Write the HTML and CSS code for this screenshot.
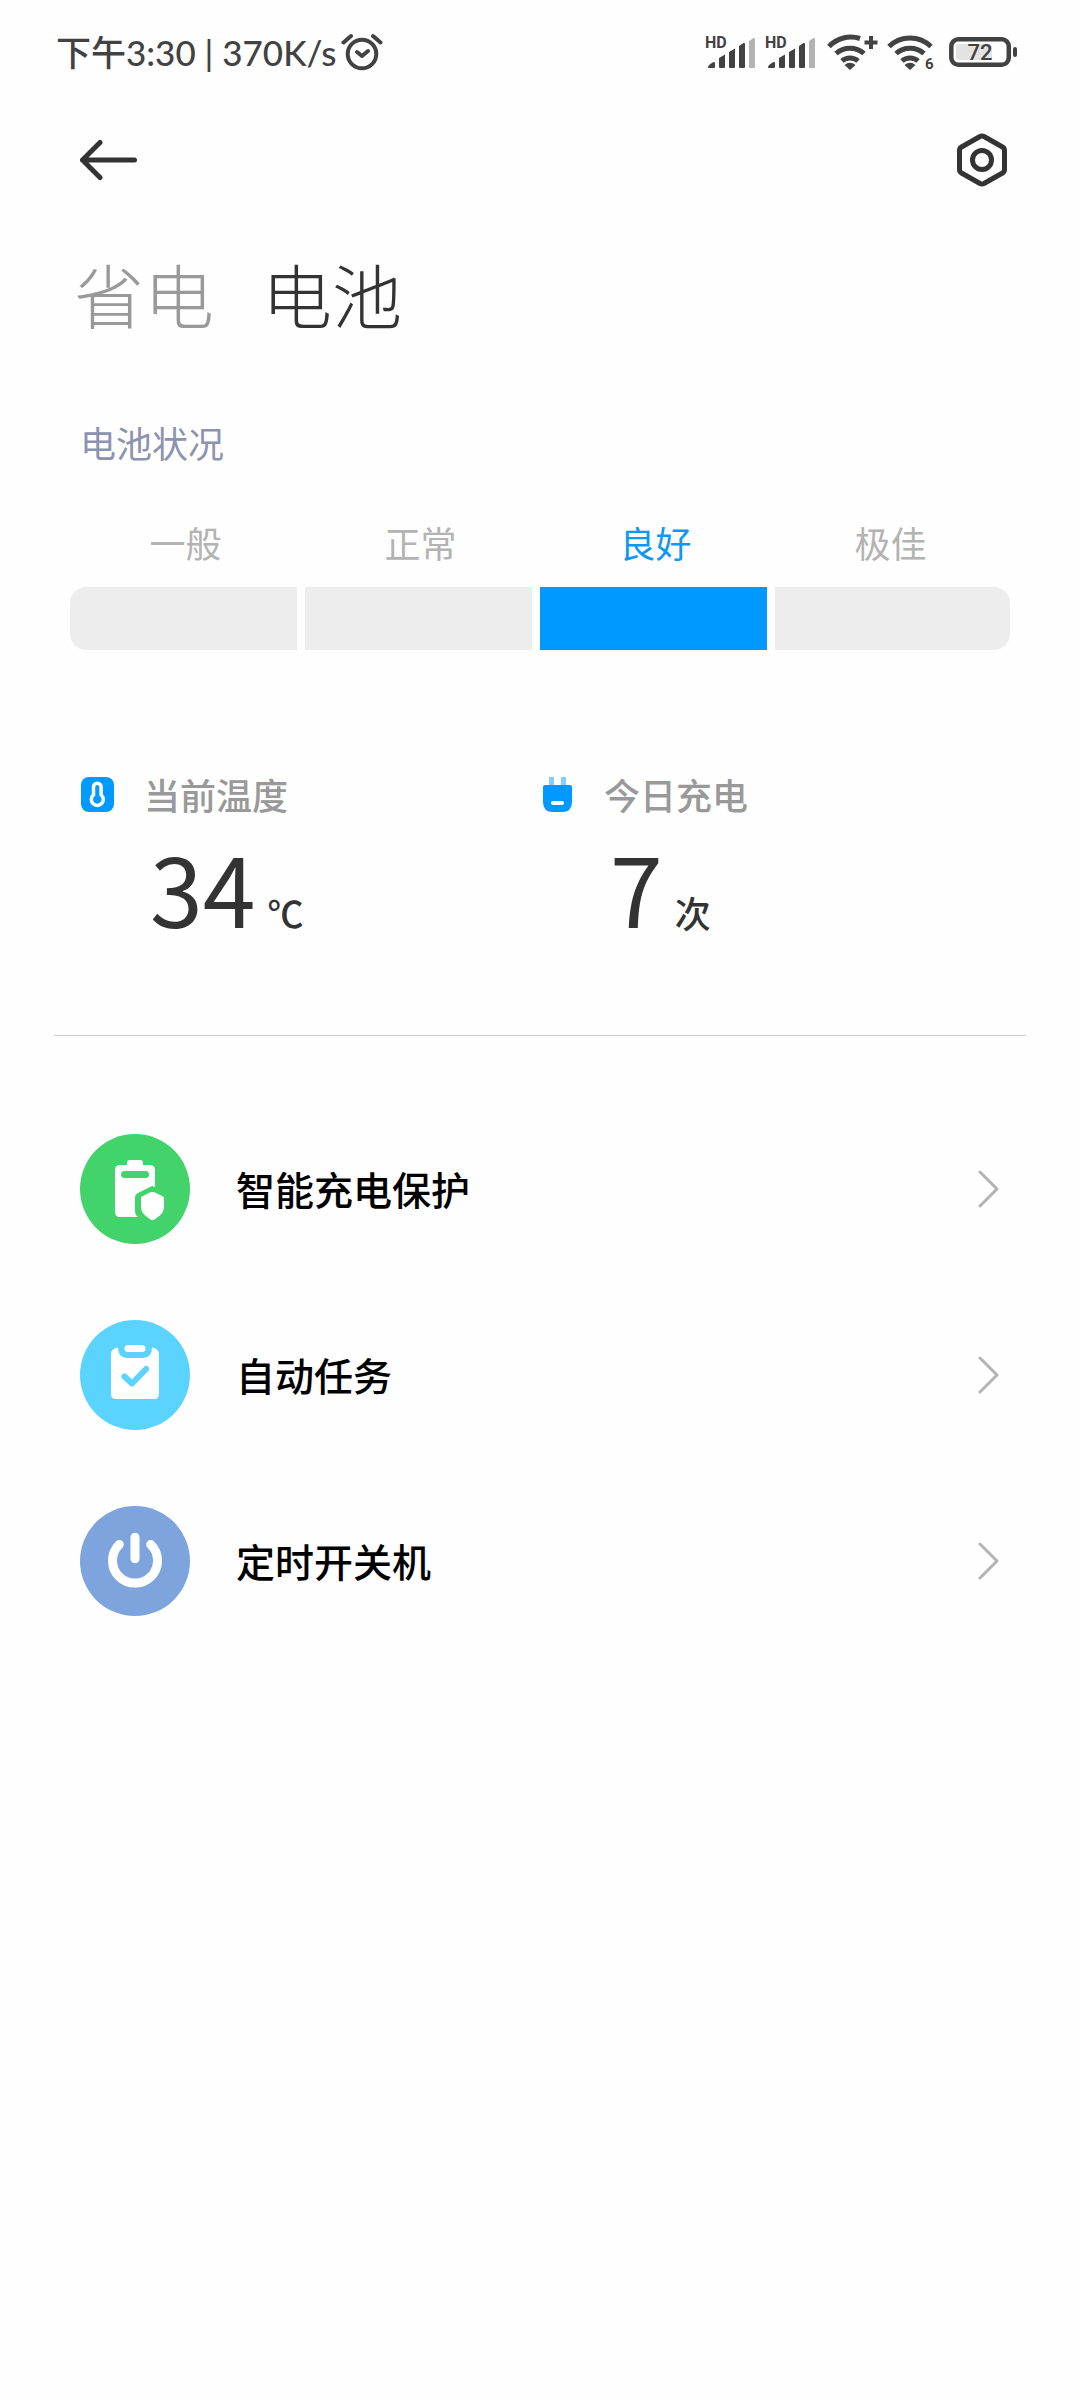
FILE: index.html
```html
<!DOCTYPE html>
<html lang="zh-CN">
<head>
  <meta charset="UTF-8" />
  <meta name="viewport" content="width=device-width, initial-scale=1.0"/>
  <title>电池</title>
  <link rel="stylesheet" href="styles.css">
</head>
<body>
  <div class="status-bar">
    <div class="status-left">
      <span>下午3:30 | 370K/s</span>
      <svg width="42" height="40" viewBox="0 0 42 40" fill="none" stroke="#424242" stroke-width="4" stroke-linecap="round" stroke-linejoin="round">
        <circle cx="21" cy="22" r="14.3"/>
        <path d="M2.500 10.500 10 4M39.500 10.500 32 4M16 20l5 4 6-5"/>
      </svg>
    </div>
    <div class="status-right">
      <svg width="52" height="40" viewBox="0 0 52 40" fill="#424242">
        <text class="hd" x="0" y="16">HD</text>
        <path d="M3 35.500q0-2 2-3.200l3-2q2-1 2 1v3.700q0 1-1 1H4q-1 0-1-.5z"/>
        <path d="M14 26l6-3.500V35q0 1-1 1h-4q-1 0-1-1zM24 20l6-3.500V35q0 1-1 1h-4q-1 0-1-1zM34 14l4.500-3q1.500-.5 1.500 1V35q0 1-1 1h-4q-1 0-1-1z"/>
        <path fill="#b3b3b3" d="M44 9l4.500-3q1.500-.5 1.500 1V35q0 1-1 1h-4q-1 0-1-1z"/>
      </svg>
      <svg width="52" height="40" viewBox="0 0 52 40" fill="#424242">
        <text class="hd" x="0" y="16">HD</text>
        <path d="M3 35.500q0-2 2-3.200l3-2q2-1 2 1v3.700q0 1-1 1H4q-1 0-1-.5z"/>
        <path d="M14 26l6-3.500V35q0 1-1 1h-4q-1 0-1-1zM24 20l6-3.500V35q0 1-1 1h-4q-1 0-1-1zM34 14l4.500-3q1.500-.5 1.500 1V35q0 1-1 1h-4q-1 0-1-1z"/>
        <path fill="#b3b3b3" d="M44 9l4.500-3q1.500-.5 1.500 1V35q0 1-1 1h-4q-1 0-1-1z"/>
      </svg>
      <svg class="wifi" width="52" height="40" viewBox="0 0 52 40" fill="none" stroke="#424242" stroke-width="5">
        <path d="M2 14.500A30 30 0 0 1 33 6.500M9 21.500A21 21 0 0 1 37 21.500M15 29A12 12 0 0 1 31 29"/>
        <path d="M44 4v13M37.500 10.500h13" stroke-width="4"/>
        <path d="M17.500 33q5.500-4.500 11 0l-5.500 5z" fill="#424242" stroke="none"/>
      </svg>
      <svg width="52" height="40" viewBox="0 0 52 40" fill="none" stroke="#424242" stroke-width="5">
        <path d="M2 14.500A30 30 0 0 1 44 14.500M9 21.500A21 21 0 0 1 37 21.500M15 29A12 12 0 0 1 31 29"/>
        <path d="M17.500 33q5.500-4.500 11 0l-5.500 5z" fill="#424242" stroke="none"/>
        <text class="wifi-gen" x="38" y="37">6</text>
      </svg>
      <svg class="battery" width="68" height="32" viewBox="0 0 68 32">
        <rect x="2.300" y="3.300" width="57.500" height="25.500" rx="7" fill="none" stroke="#424242" stroke-width="4.500"/>
        <rect x="7" y="8" width="36" height="16" rx="3" fill="#e3e3e3"/>
        <rect x="64" y="11" width="4" height="10" rx="2" fill="#424242"/>
        <text class="level" x="31" y="24">72</text>
      </svg>
    </div>
  </div>

  <header>
    <button type="button" class="icon-btn" aria-label="返回">
      <svg width="58" height="54" viewBox="0 0 58 54" fill="none" stroke="#333" stroke-width="5" stroke-linecap="round" stroke-linejoin="round">
        <path d="M54.500 27H2.500M20 9.500 2.500 27 20 44.500"/>
      </svg>
    </button>
    <button type="button" class="icon-btn" aria-label="设置">
      <svg width="50" height="54" viewBox="0 0 50 54" fill="none" stroke="#333" stroke-width="5" stroke-linejoin="round">
        <path d="M23 3.500q2-1 4 0l18.500 10.500q2 1.200 2 3.500v19q0 2.300-2 3.500L27 50.500q-2 1-4 0L4.500 40q-2-1.200-2-3.500v-19q0-2.300 2-3.500z"/>
        <circle cx="25" cy="27" r="9.500"/>
      </svg>
    </button>
  </header>

  <nav class="tabs">
    <a href="#saver">省电</a>
    <a href="#battery" class="active">电池</a>
  </nav>

  <main>
    <h2>电池状况</h2>
    <ul class="health">
      <li><span>一般</span><div class="bar"></div></li>
      <li><span>正常</span><div class="bar"></div></li>
      <li class="current"><span>良好</span><div class="bar"></div></li>
      <li><span>极佳</span><div class="bar"></div></li>
    </ul>

    <section class="stats">
      <div class="stat">
        <svg width="34" height="36" viewBox="0 0 34 36">
          <rect x="1" y="1" width="33" height="35" rx="8" fill="#0099ff"/>
          <path d="M13.500 11a3.800 3.800 0 0 1 7.600 0v7.800a6 6 0 1 1-7.600 0z" fill="none" stroke="#fff" stroke-width="3.500"/>
        </svg>
        <h3>当前温度</h3>
        <p><strong>34</strong>℃</p>
      </div>
      <div class="stat">
        <svg width="34" height="36" viewBox="0 0 34 36">
          <path d="M9 1h5v10H9zM21 1h5v10h-5z" fill="#85ccff"/>
          <path d="M5 9h25q2 0 2 2v15q0 10-10 10h-9q-10 0-10-10V11q0-2 2-2z" fill="#0099ff"/>
          <rect x="11" y="25" width="13" height="4" rx="2" fill="#fff"/>
        </svg>
        <h3>今日充电</h3>
        <p><strong>7</strong>次</p>
      </div>
    </section>
  </main>

  <hr>

  <ul class="menu">
    <li>
      <a href="#protect">
        <svg width="110" height="110" viewBox="0 0 110 110">
          <circle cx="55" cy="55" r="55" fill="#42d36b"/>
          <path d="M40 31h7v-2q0-3 3-3h10q3 0 3 3v2h7q5 0 5 5v17l-3-1-14 7q-3 1.500-3 4v14q0 4 3 6H40q-5 0-5-5V36q0-5 5-5z" fill="#fff"/>
          <rect x="41" y="37" width="28" height="7" rx="3.500" fill="#42d36b"/>
          <path d="M70.500 58.300q2-.8 4 0l8 4q1.500.8 1.500 2.500v8q0 5-4.500 9l-5 3.800q-2 1.200-4 0l-5-3.800q-4.500-4-4.500-9v-8q0-1.700 1.500-2.500z" fill="#fff"/>
        </svg>
        <span>智能充电保护</span>
        <svg class="arrow" width="22" height="38" viewBox="0 0 22 38"><path d="M2 2 19 19 2 36"/></svg>
      </a>
    </li>
    <li>
      <a href="#tasks">
        <svg width="110" height="110" viewBox="0 0 110 110">
          <circle cx="55" cy="55" r="55" fill="#5ad3ff"/>
          <path d="M38 27.500q0 10.500 9 10.500h16q9 0 9-10.500 7 1 7 7V74q0 5-5 5H36q-5 0-5-5V34.500q0-6 7-7z" fill="#fff"/>
          <rect x="44.500" y="25" width="21" height="7" rx="3.500" fill="#fff"/>
          <path d="M44.500 56.500 52 63.500 66 49" fill="none" stroke="#5ad3ff" stroke-width="6" stroke-linecap="round" stroke-linejoin="round"/>
        </svg>
        <span>自动任务</span>
        <svg class="arrow" width="22" height="38" viewBox="0 0 22 38"><path d="M2 2 19 19 2 36"/></svg>
      </a>
    </li>
    <li>
      <a href="#schedule">
        <svg width="110" height="110" viewBox="0 0 110 110">
          <circle cx="55" cy="55" r="55" fill="#7ea4de"/>
          <path d="M39.300 38.500a22.500 22.500 0 1 0 31.400 0M55 31.300v21.400" fill="none" stroke="#fff" stroke-width="9" stroke-linecap="round"/>
        </svg>
        <span>定时开关机</span>
        <svg class="arrow" width="22" height="38" viewBox="0 0 22 38"><path d="M2 2 19 19 2 36"/></svg>
      </a>
    </li>
  </ul>
</body>
</html>
```

FILE: styles.css
```css
* {
  box-sizing: border-box;
}
body {
  margin: 0;
  background-color: #fefefe;
  color: #333;
  font-family: "Noto Sans CJK SC", sans-serif;
}
h2, h3, p, ul {
  margin: 0;
  padding: 0;
  font-weight: 400;
}
ul {
  list-style-type: none;
}
svg {
  display: block;
  flex: none;
}
a {
  color: inherit;
  text-decoration: none;
}

.status-bar {
  display: flex;
  justify-content: space-between;
  align-items: center;
  height: 104px;
  padding: 0 63px 0 56px;
}
.status-left {
  display: flex;
  align-items: center;
  gap: 5px;
  color: #424242;
  font-family: Lato, "Noto Sans CJK SC", sans-serif;
  font-size: 35px;
  font-weight: 500;
  line-height: 40px;
}
.status-right {
  display: flex;
  align-items: center;
  gap: 8px;
}
.wifi {
  margin-left: 2px;
}
.battery {
  margin-left: 2px;
}
.hd {
  font: 700 16px Roboto, sans-serif;
}
.wifi-gen {
  font: 700 15px Roboto, sans-serif;
  fill: #424242;
  stroke: none;
}
.level {
  font: 500 22px Roboto, sans-serif;
  fill: #424242;
  text-anchor: middle;
}

header {
  display: flex;
  justify-content: space-between;
  align-items: center;
  height: 112px;
  padding: 0 73px 0 80px;
}
.icon-btn {
  padding: 0;
  border: none;
  background: none;
}

.tabs {
  display: flex;
  gap: 48px;
  padding: 28px 74px 0;
  font-size: 70px;
  font-weight: 300;
  line-height: 100px;
  color: #999;
}
.tabs .active {
  color: #333;
}

h2 {
  padding: 74px 80px 0;
  font-size: 36px;
  line-height: 48px;
  color: #8c93b0;
}

.health {
  display: grid;
  grid-template-columns: repeat(4, 1fr);
  padding: 52px 70px 0;
  font-size: 36px;
  line-height: 48px;
  text-align: center;
  color: #b3b3b3;
}
.health span {
  padding-right: 4px;
}
.health .bar {
  height: 63px;
  margin: 21px 8px 0 0;
  background-color: #ededed;
}
.health li:first-child .bar {
  border-radius: 16px 0 0 16px;
}
.health li:last-child .bar {
  margin-right: 0;
  border-radius: 0 16px 16px 0;
}
.health .current {
  color: #0d97f7;
}
.health .current .bar {
  background-color: #0099ff;
}

.stats {
  display: grid;
  grid-template-columns: 1fr 1fr;
  padding: 120px 80px 0;
}
.stat {
  display: grid;
  grid-template-columns: 34px 1fr;
  column-gap: 30px;
  align-items: center;
}
h3 {
  font-size: 36px;
  font-weight: 500;
  line-height: 48px;
  color: #999;
}
.stat p {
  grid-column: 2;
  display: flex;
  align-items: baseline;
  gap: 12px;
  padding-left: 6px;
  font-size: 36px;
  font-weight: 500;
  line-height: 138px;
}
.stat strong {
  font-size: 95px;
  font-weight: 400;
}

hr {
  margin: 54px 54px 0;
  border: none;
  border-top: 1px solid #ccc;
}

.menu {
  display: flex;
  flex-direction: column;
  gap: 76px;
  padding: 98px 80px;
}
.menu a {
  display: flex;
  align-items: center;
  gap: 46px;
  color: #000;
  font-size: 39px;
  font-weight: 500;
  line-height: 56px;
}
.menu span {
  padding-bottom: 2px;
}
.arrow {
  margin-left: auto;
  fill: none;
  stroke: #b3b3b3;
  stroke-width: 3px;
  stroke-linecap: round;
  stroke-linejoin: round;
}
```
